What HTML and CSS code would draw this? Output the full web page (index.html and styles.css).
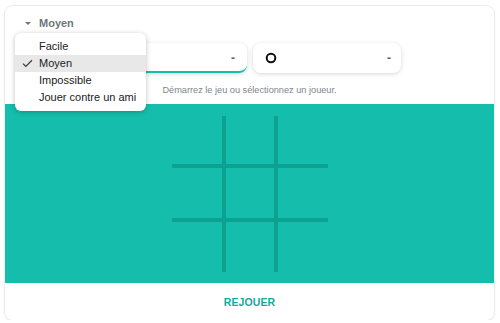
FILE: index.html
```html
<!DOCTYPE html>
<html lang="fr">
<head>
<meta charset="utf-8">
<title>Morpion</title>
<link rel="stylesheet" href="styles.css">
</head>
<body>
<div class="card">
  <div class="header">
    <div class="level">
      <span class="caret"></span>
      <span class="level-name">Moyen</span>
    </div>
    <div class="players">
      <div class="player active">
        <svg class="mark" width="12" height="12" viewBox="0 0 12 12"><path d="M2 2L10 10M10 2L2 10" stroke="#202124" stroke-width="2" fill="none"/></svg>
        <span class="score">-</span>
      </div>
      <div class="player">
        <svg class="mark" width="12" height="12" viewBox="0 0 12 12"><circle cx="6" cy="6" r="4.3" stroke="#111" stroke-width="2" fill="none"/></svg>
        <span class="score">-</span>
      </div>
    </div>
    <div class="hint">Démarrez le jeu ou sélectionnez un joueur.</div>
  </div>
  <div class="board">
    <div class="grid">
      <div class="line v v1"></div>
      <div class="line v v2"></div>
      <div class="line h h1"></div>
      <div class="line h h2"></div>
    </div>
  </div>
  <div class="footer">REJOUER</div>
  <ul class="menu">
    <li class="item">Facile</li>
    <li class="item selected"><svg class="check" width="11" height="9" viewBox="0 0 11 9"><path d="M1 4.6L3.8 7.4L10 1.2" stroke="#3c4043" stroke-width="1.3" fill="none"/></svg>Moyen</li>
    <li class="item">Impossible</li>
    <li class="item">Jouer contre un ami</li>
  </ul>
</div>
</body>
</html>
```
FILE: styles.css
```css
* { box-sizing: border-box; }
html, body { margin: 0; padding: 0; background: #fff; }
body {
  font-family: "Liberation Sans", Arial, sans-serif;
  padding: 6px 6px 0 5px;
}
.card {
  position: relative;
  width: 489px;
  height: 314px;
  border-radius: 8px;
  background: #fff;
  box-shadow: 0 0 0 1px #ececec, 0 1px 3px rgba(0,0,0,0.12);
}
.header {
  height: 98px;
  padding-top: 8px;
}
.level {
  height: 18px;
  display: flex;
  align-items: center;
  padding-left: 20px;
}
.caret {
  width: 0; height: 0;
  border-left: 3.5px solid transparent;
  border-right: 3.5px solid transparent;
  border-top: 3.5px solid #70757a;
  margin-right: 8px;
}
.level-name {
  font-size: 11px;
  font-weight: bold;
  color: #70757a;
}
.players {
  margin-top: 11px;
  display: flex;
  justify-content: center;
  gap: 6px;
  padding-left: 1px;
}
.player {
  width: 148px;
  height: 30px;
  border-radius: 8px;
  background: #fff;
  box-shadow: 0 1px 4px rgba(0,0,0,0.16);
  display: flex;
  align-items: center;
  justify-content: space-between;
  padding: 0 10px 0 12px;
}
.player.active {
  border-bottom: 2px solid #14bdac;
  padding-top: 2px;
  padding-right: 12px;
}
.score {
  font-size: 12px;
  font-weight: bold;
  color: #5f6368;
}
.hint {
  margin-top: 11px;
  text-align: center;
  font-size: 9.2px;
  color: #80868b;
  line-height: 12px;
}
.board {
  height: 179px;
  background: #14bdac;
  display: flex;
  align-items: center;
  justify-content: center;
  padding-left: 1px;
}
.grid {
  position: relative;
  width: 156px;
  height: 156px;
  margin-top: 1px;
}
.line {
  position: absolute;
  background: #0da192;
}
.v { width: 4px; top: 0; bottom: 0; }
.v1 { left: 50px; }
.v2 { left: 102px; }
.h { height: 4px; left: 0; right: 0; }
.h1 { top: 48px; }
.h2 { top: 102px; }
.footer {
  height: 37px;
  display: flex;
  align-items: center;
  justify-content: center;
  font-size: 10.5px;
  font-weight: bold;
  color: #14a99b;
  letter-spacing: 0.1px;
}
.menu {
  position: absolute;
  left: 10px;
  top: 27px;
  width: 131px;
  margin: 0;
  padding: 5px 0;
  list-style: none;
  background: #fff;
  border-radius: 6px;
  box-shadow: 0 1px 5px rgba(0,0,0,0.25);
}
.item {
  position: relative;
  height: 17px;
  line-height: 17px;
  font-size: 11px;
  color: #202124;
  padding-left: 24px;
}
.item.selected { background: #e8e8e8; }
.check {
  position: absolute;
  left: 7px;
  top: 4px;
}
```
